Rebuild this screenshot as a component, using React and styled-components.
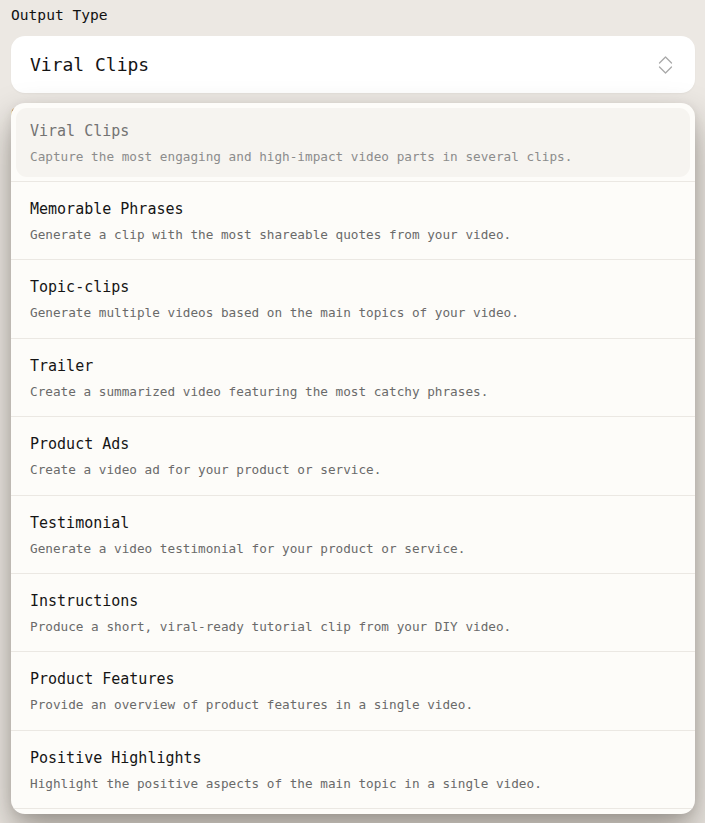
import styled, { createGlobalStyle } from 'styled-components'

const GlobalStyle = createGlobalStyle`
  html, body {
    margin: 0;
    padding: 0;
    background: #ece8e3;
  }
  body {
    font-family: 'DejaVu Sans Mono', 'Liberation Mono', monospace;
    color: #161616;
  }
`

const Page = styled.div`
  padding: 5px 10px 40px 11px;
  height: 823px;
  box-sizing: border-box;
  overflow: hidden;
`

const Field = styled.div`
  position: relative;
  display: flex;
  flex-direction: column;
`

const Label = styled.div`
  font-size: 14.6px;
  line-height: 20px;
  font-weight: 500;
  color: #111;
  margin-bottom: ${(p) => p.$gap || 0}px;
`

const Trigger = styled.button`
  display: flex;
  align-items: center;
  justify-content: space-between;
  height: 57px;
  padding: 0 22px 0 19px;
  background: #ffffff;
  border: none;
  border-radius: 14px;
  font-family: inherit;
  font-size: 18px;
  color: #141414;
  box-shadow: 0 1px 2px rgba(0, 0, 0, 0.04);
  text-align: left;
`

const Menu = styled.div`
  position: absolute;
  top: 98px;
  left: 0;
  right: 0;
  padding: 0.6px 0 5px;
  background: #fdfcf9;
  border-radius: 14px;
  box-shadow: 0 18px 36px rgba(30, 20, 10, 0.38), 0 2px 10px rgba(0, 0, 0, 0.08);
  overflow: hidden;
`

const Option = styled.div`
  padding: 4px 5px;
  border-bottom: 1px solid #ebe8e3;
`

const OptionInner = styled.div`
  display: flex;
  flex-direction: column;
  gap: 7px;
  padding: 13px 14px 11.4px;
  border-radius: 11px;
  background: ${(p) => (p.$active ? '#f6f4f0' : 'transparent')};
`

const OptionTitle = styled.div`
  font-size: 15px;
  line-height: 20px;
  color: ${(p) => (p.$active ? '#737373' : '#151515')};
`

const OptionDesc = styled.div`
  font-size: 12.7px;
  line-height: 18px;
  color: ${(p) => (p.$active ? '#8c8c8c' : '#6a6a6a')};
`

const options = [
  ['Viral Clips', 'Capture the most engaging and high-impact video parts in several clips.'],
  ['Memorable Phrases', 'Generate a clip with the most shareable quotes from your video.'],
  ['Topic-clips', 'Generate multiple videos based on the main topics of your video.'],
  ['Trailer', 'Create a summarized video featuring the most catchy phrases.'],
  ['Product Ads', 'Create a video ad for your product or service.'],
  ['Testimonial', 'Generate a video testimonial for your product or service.'],
  ['Instructions', 'Produce a short, viral-ready tutorial clip from your DIY video.'],
  ['Product Features', 'Provide an overview of product features in a single video.'],
  ['Positive Highlights', 'Highlight the positive aspects of the main topic in a single video.'],
]

function UpDown() {
  return (
    <svg width="15" height="18" viewBox="0 0 15 18" fill="none" stroke="#a9a9a9" strokeWidth="1.3" strokeLinecap="round" strokeLinejoin="round">
      <path d="M1.5 7 L7.5 1 L13.5 7" />
      <path d="M1.5 11 L7.5 17 L13.5 11" />
    </svg>
  )
}

export default function App() {
  const selected = 'Viral Clips'
  return (
    <Page>
      <GlobalStyle />
      <Field>
        <Label $gap={11}>Output Type</Label>
        <Trigger>
          <span>{selected}</span>
          <UpDown />
        </Trigger>
        <Label style={{ marginTop: 10 }}>Clip Length</Label>
        <Menu>
          {options.map(([title, desc]) => {
            const active = title === selected
            return (
              <Option key={title}>
                <OptionInner $active={active}>
                  <OptionTitle $active={active}>{title}</OptionTitle>
                  <OptionDesc $active={active}>{desc}</OptionDesc>
                </OptionInner>
              </Option>
            )
          })}
        </Menu>
      </Field>
    </Page>
  )
}
